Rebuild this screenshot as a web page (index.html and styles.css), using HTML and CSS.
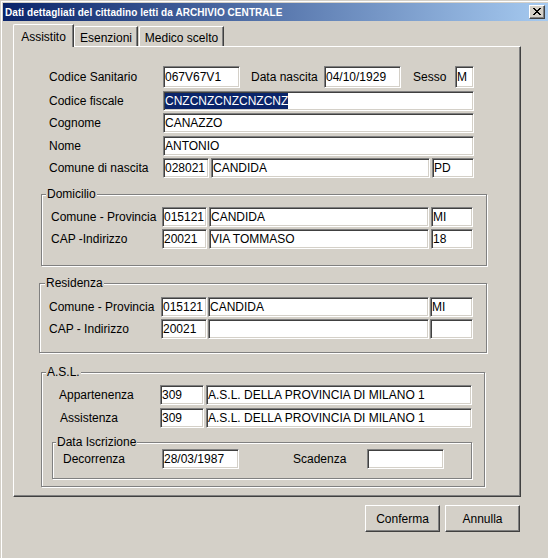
FILE: index.html
```html
<!DOCTYPE html>
<html lang="it">
<head>
<meta charset="utf-8">
<title>Dati dettagliati del cittadino</title>
<link rel="stylesheet" href="styles.css">
</head>
<body>
<div class="window">
  <div class="frame">
    <div class="titlebar">
      <span class="title">Dati dettagliati del cittadino letti da ARCHIVIO CENTRALE</span>
      <div class="close">
        <svg width="8" height="7" viewBox="0 0 8 7" shape-rendering="crispEdges">
          <rect x="0" y="0" width="2" height="1"/><rect x="6" y="0" width="2" height="1"/>
          <rect x="1" y="1" width="2" height="1"/><rect x="5" y="1" width="2" height="1"/>
          <rect x="2" y="2" width="4" height="1"/>
          <rect x="3" y="3" width="2" height="1"/>
          <rect x="2" y="4" width="4" height="1"/>
          <rect x="1" y="5" width="2" height="1"/><rect x="5" y="5" width="2" height="1"/>
          <rect x="0" y="6" width="2" height="1"/><rect x="6" y="6" width="2" height="1"/>
        </svg>
      </div>
    </div>

    <div class="tabs">
      <div class="tab tab-active">Assistito</div>
      <div class="tab tab-esenzioni">Esenzioni</div>
      <div class="tab tab-medico">Medico scelto</div>
    </div>

    <div class="panel">
      <div class="row row-tall row-first">
        <span class="lbl l-main">Codice Sanitario</span>
        <div class="fld f-date">067V67V1</div>
        <span class="lbl l-nascita">Data nascita</span>
        <div class="fld f-date">04/10/1929</div>
        <span class="lbl l-sesso">Sesso</span>
        <div class="fld f-sesso">M</div>
      </div>
      <div class="row row-main gap3">
        <span class="lbl l-main">Codice fiscale</span>
        <div class="fld f-full"><span class="sel">CNZCNZCNZCNZCNZ</span></div>
      </div>
      <div class="row row-main gap2">
        <span class="lbl l-main">Cognome</span>
        <div class="fld f-full">CANAZZO</div>
      </div>
      <div class="row row-main gap3">
        <span class="lbl l-main">Nome</span>
        <div class="fld f-full">ANTONIO</div>
      </div>
      <div class="row row-main gap2">
        <span class="lbl l-main">Comune di nascita</span>
        <div class="fld f-code">028021</div>
        <div class="fld f-comune">CANDIDA</div>
        <div class="fld f-prov">PD</div>
      </div>

      <div class="grp grp-dom">
        <span class="legend">Domicilio</span>
        <div class="row row-dom grp-first">
          <span class="lbl l-dom">Comune - Provincia</span>
          <div class="fld f-dcode">015121</div>
          <div class="fld f-dname">CANDIDA</div>
          <div class="fld f-dprov">MI</div>
        </div>
        <div class="row row-dom gap2">
          <span class="lbl l-dom">CAP -Indirizzo</span>
          <div class="fld f-dcode">20021</div>
          <div class="fld f-dname">VIA TOMMASO</div>
          <div class="fld f-dprov">18</div>
        </div>
      </div>

      <div class="grp grp-res">
        <span class="legend">Residenza</span>
        <div class="row row-res grp-first-res">
          <span class="lbl l-res">Comune - Provincia</span>
          <div class="fld f-rcode">015121</div>
          <div class="fld f-rname">CANDIDA</div>
          <div class="fld f-rprov">MI</div>
        </div>
        <div class="row row-res gap2">
          <span class="lbl l-res">CAP - Indirizzo</span>
          <div class="fld f-rcode">20021</div>
          <div class="fld f-rname"></div>
          <div class="fld f-rprov"></div>
        </div>
      </div>

      <div class="grp grp-asl">
        <span class="legend legend-asl">A.S.L.</span>
        <div class="row row-asl grp-first">
          <span class="lbl l-asl">Appartenenza</span>
          <div class="fld f-acode">309</div>
          <div class="fld f-aname">A.S.L. DELLA PROVINCIA DI MILANO 1</div>
        </div>
        <div class="row row-asl gap3">
          <span class="lbl l-asl l-assist">Assistenza</span>
          <div class="fld f-acode">309</div>
          <div class="fld f-aname">A.S.L. DELLA PROVINCIA DI MILANO 1</div>
        </div>

        <div class="grp grp-iscr">
          <span class="legend legend-iscr">Data Iscrizione</span>
          <div class="row row-iscr">
            <span class="lbl l-decor">Decorrenza</span>
            <div class="fld f-date">28/03/1987</div>
            <span class="lbl l-scad">Scadenza</span>
            <div class="fld f-date"></div>
          </div>
        </div>
      </div>
    </div>

    <div class="buttons">
      <div class="btn">Conferma</div>
      <div class="btn">Annulla</div>
    </div>
  </div>
</div>
</body>
</html>
```

FILE: styles.css
```css
* { box-sizing: border-box; }

body {
  margin: 0;
  background: #d4d0c8;
  font-family: "Liberation Sans", Arial, sans-serif;
  font-size: 12px;
  color: #000;
}

.window {
  width: 548px;
  height: 558px;
  overflow: hidden;
  padding: 1px 0 0 1px;
  background: #d4d0c8;
}

.frame {
  height: 100%;
  border-top: 1px solid #fff;
  border-left: 1px solid #fff;
  padding: 1px 0 0 1px;
}

/* title bar */
.titlebar {
  height: 18px;
  display: flex;
  align-items: center;
  padding-left: 2px;
  background: linear-gradient(to right, #0a246a, #a6caf0);
}

.title {
  color: #fff;
  font-weight: bold;
  font-size: 10px;
  letter-spacing: 0.06px;
  line-height: 12px;
  white-space: nowrap;
  margin-top: 1px;
}

.close {
  margin-left: auto;
  margin-right: 3px;
  width: 16px;
  height: 14px;
  background: #d4d0c8;
  border: 1px solid;
  border-color: #fff #404040 #404040 #fff;
  box-shadow: inset -1px -1px #808080;
  display: flex;
  align-items: center;
  justify-content: center;
  padding-bottom: 1px;
}

.close svg { fill: #000; display: block; }

/* tabs */
.tabs {
  display: flex;
  align-items: flex-end;
  height: 22px;
  margin: 3px 0 0 10px;
}

.tab {
  flex: none;
  height: 20px;
  border-top: 1px solid #fff;
  border-left: 1px solid #fff;
  border-right: 1px solid #404040;
  box-shadow: inset -1px 0 #808080;
  border-top-left-radius: 2px;
  padding-top: 4px;
  line-height: 14px;
  text-align: center;
  white-space: nowrap;
}

.tab-active {
  width: 61px;
  height: 23px;
  margin-bottom: -1px;
  padding-top: 5px;
  position: relative;
  z-index: 1;
  background: #d4d0c8;
}

.tab-esenzioni { width: 64px; }
.tab-medico { width: 85px; margin-left: 1px; }

/* panel */
.panel {
  margin-left: 10px;
  width: 508px;
  height: 451px;
  border-top: 1px solid #fff;
  border-left: 1px solid #fff;
  border-right: 1px solid #404040;
  border-bottom: 1px solid #404040;
  box-shadow: inset -1px -1px #808080;
}

/* rows */
.row {
  display: flex;
  align-items: center;
  height: 20px;
}

.row-tall { height: 22px; }
.row-first { margin-top: 19px; }
.row-main { padding-left: 35px; }
.row-first { padding-left: 35px; }
.gap2 { margin-top: 2px; }
.gap3 { margin-top: 3px; }

.lbl {
  flex: none;
  white-space: nowrap;
  line-height: 14px;
}

.fld {
  flex: none;
  height: 20px;
  display: flex;
  align-items: center;
  background: #fff;
  border: 1px solid;
  border-color: #808080 #fff #fff #808080;
  box-shadow: inset 1px 1px #404040, inset -1px -1px #d4d0c8;
  padding-left: 1px;
  white-space: nowrap;
  overflow: hidden;
  line-height: 14px;
}

.row-tall .fld { height: 22px; }

.sel {
  display: block;
  height: 16px;
  line-height: 16px;
  background: #0a246a;
  color: #fff;
}

/* main section widths */
.l-main { width: 114px; }
.l-nascita { width: 73px; margin-left: 11px; }
.l-sesso { width: 42px; margin-left: 12px; }
.f-date { width: 77px; }
.f-sesso { width: 19px; }
.f-full { width: 311px; }
.f-code { width: 46px; }
.f-comune { width: 219px; margin-left: 2px; }
.f-prov { width: 42px; margin-left: 2px; }

/* group boxes */
.grp {
  position: relative;
  border: 1px solid #808080;
  box-shadow: inset 1px 1px #fff, 1px 1px #fff;
}

.legend {
  position: absolute;
  top: -8px;
  left: 4px;
  padding: 0 1px;
  line-height: 14px;
  background: #d4d0c8;
  white-space: nowrap;
}

.grp-dom {
  margin: 16px 0 0 27px;
  width: 446px;
  height: 72px;
}

.grp-first { margin-top: 12px; }
.row-dom { padding-left: 9px; }
.l-dom { width: 111px; }
.f-dcode { width: 45px; }
.f-dname { width: 220px; margin-left: 2px; }
.f-dprov { width: 42px; margin-left: 2px; }

.grp-res {
  margin: 17px 0 0 25px;
  width: 448px;
  height: 70px;
}

.grp-res .legend { left: 5px; }
.grp-first-res { margin-top: 13px; }
.row-res { padding-left: 9px; }
.l-res { width: 112px; }
.f-rcode { width: 46px; }
.f-rname { width: 221px; margin-left: 1px; }
.f-rprov { width: 43px; margin-left: 1px; }

.grp-asl {
  margin: 19px 0 0 27px;
  width: 444px;
  height: 115px;
}

.row-asl { padding-left: 17px; }
.l-asl { width: 101px; }
.l-assist { padding-left: 1px; }
.f-acode { width: 44px; }
.f-aname { width: 266px; margin-left: 2px; }

.grp-iscr {
  margin: 14px 0 0 10px;
  width: 420px;
  height: 37px;
}

.legend-iscr { left: 3px; }
.row-iscr { margin-top: 6px; padding-left: 10px; }
.l-decor { width: 99px; }
.l-scad { width: 74px; margin-left: 54px; }

/* buttons */
.buttons {
  display: flex;
  gap: 5px;
  margin: 8px 0 0 362px;
}

.btn {
  width: 75px;
  height: 27px;
  display: flex;
  align-items: center;
  justify-content: center;
  background: #d4d0c8;
  border: 1px solid;
  border-color: #fff #404040 #404040 #fff;
  box-shadow: inset -1px -1px #808080;
  line-height: 14px;
}
```
